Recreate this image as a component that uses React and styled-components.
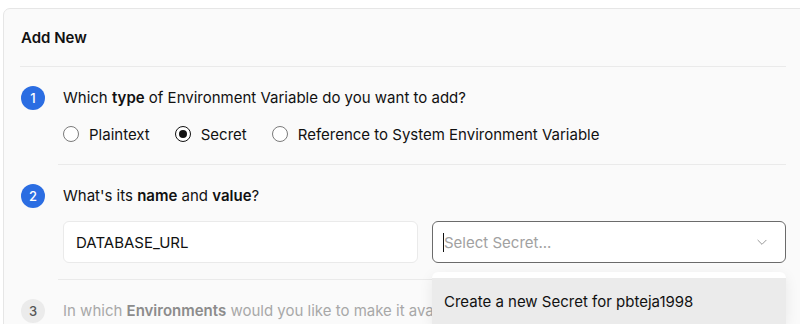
import styled, { createGlobalStyle } from "styled-components"

const GlobalStyle = createGlobalStyle`
    html, body {
        margin: 0;
        background: #ffffff;
        font-family: Inter, "Noto Sans", sans-serif;
        color: #111111;
        overflow: hidden;
    }
`

export default function App() {
    return (
        <Page>
            <GlobalStyle />
            <Card>
                <CardHeader>Add New</CardHeader>
                <Divider />

                <Step>
                    <StepNumber>1</StepNumber>
                    <StepBody>
                        <StepTitle>Which <b>type</b> of Environment Variable do you want to add?</StepTitle>
                        <RadioRow>
                            <RadioOption>
                                <Radio />
                                Plaintext
                            </RadioOption>
                            <RadioOption>
                                <Radio checked />
                                Secret
                            </RadioOption>
                            <RadioOption>
                                <Radio />
                                Reference to System Environment Variable
                            </RadioOption>
                        </RadioRow>
                    </StepBody>
                </Step>
                <Divider inset />

                <Step>
                    <StepNumber>2</StepNumber>
                    <StepBody>
                        <StepTitle>What's its <b>name</b> and <b>value</b>?</StepTitle>
                        <Fields>
                            <TextField>DATABASE_URL</TextField>
                            <SelectWrap>
                                <SelectBox>
                                    <Caret />
                                    <Placeholder>Select Secret...</Placeholder>
                                    <svg width="14" height="14" viewBox="0 0 24 24" fill="none" stroke="#8f8f8f" strokeWidth="1.6" strokeLinecap="round" strokeLinejoin="round">
                                        <path d="M5 9l7 7 7-7" />
                                    </svg>
                                </SelectBox>
                                <Menu>
                                    <MenuItem active>Create a new Secret for pbteja1998</MenuItem>
                                </Menu>
                            </SelectWrap>
                        </Fields>
                    </StepBody>
                </Step>
                <Divider inset />

                <Step>
                    <StepNumber muted>3</StepNumber>
                    <StepBody>
                        <StepTitle muted>In which <b>Environments</b> would you like to make it available?</StepTitle>
                    </StepBody>
                </Step>
            </Card>
        </Page>
    )
}

const Page = styled.div`
    padding: 8px 0 0 3px;
    width: 797px;
    height: 316px;
    overflow: hidden;
`
const Card = styled.div`
    width: 840px;
    background: #fafafa;
    border: 1px solid #e6e6e6;
    border-radius: 7px;
    padding: 0 16px 40px 16px;
`
const CardHeader = styled.div`
    height: 57px;
    display: flex;
    align-items: center;
    padding-left: 1px;
    font-size: 15px;
    font-weight: 600;
    color: #111;
`
const Divider = styled.div`
    height: 1px;
    background: #eaeaea;
    margin-left: ${p => (p.inset ? "38px" : "0")};
    width: ${p => (p.inset ? "728px" : "766px")};
`
const Step = styled.div`
    display: flex;
    gap: 18px;
    padding: 18px 0 16px 1px;
`
const StepNumber = styled.div`
    flex: 0 0 24px;
    height: 24px;
    margin-top: 1px;
    border-radius: 50%;
    background: ${p => (p.muted ? "#ebebeb" : "#2b6de2")};
    color: ${p => (p.muted ? "#555" : "#fff")};
    font-size: 13px;
    font-weight: 500;
    display: flex;
    align-items: center;
    justify-content: center;
`
const StepBody = styled.div`
    flex: 1;
    display: flex;
    flex-direction: column;
`
const StepTitle = styled.div`
    height: 26px;
    line-height: 26px;
    white-space: nowrap;
    font-size: 15px;
    color: ${p => (p.muted ? "#a8a8a8" : "#111")};
    b {
        font-weight: 600;
        color: ${p => (p.muted ? "#8c8c8c" : "#111")};
    }
`
const RadioRow = styled.div`
    display: flex;
    gap: 25px;
    margin-top: 13px;
    margin-bottom: 4px;
`
const RadioOption = styled.label`
    display: flex;
    align-items: center;
    gap: 10px;
    font-size: 15px;
    height: 20px;
`
const Radio = styled.span`
    width: 16px;
    height: 16px;
    box-sizing: border-box;
    border-radius: 50%;
    border: ${p => (p.checked ? "1.5px solid #111" : "1px solid #7a7a7a")};
    background: #fff;
    display: flex;
    align-items: center;
    justify-content: center;
    &::after {
        content: "";
        display: ${p => (p.checked ? "block" : "none")};
        width: 8px;
        height: 8px;
        border-radius: 50%;
        background: #111;
    }
`
const Fields = styled.div`
    display: grid;
    grid-template-columns: 355px 354px;
    gap: 14px;
    margin-top: 12px;
`
const TextField = styled.div`
    height: 42px;
    box-sizing: border-box;
    border: 1px solid #eaeaea;
    border-radius: 6px;
    background: #fff;
    padding: 0 12px;
    display: flex;
    align-items: center;
    font-size: 15px;
`
const SelectWrap = styled.div`
    position: relative;
`
const SelectBox = styled.div`
    height: 42px;
    box-sizing: border-box;
    border: 1px solid #6b6b6b;
    border-radius: 6px;
    background: #fff;
    padding: 0 16px 0 10px;
    display: flex;
    align-items: center;
`
const Caret = styled.span`
    width: 1px;
    height: 19px;
    background: #111;
`
const Placeholder = styled.span`
    flex: 1;
    font-size: 15px;
    color: #a1a1a1;
`
const Menu = styled.div`
    position: absolute;
    top: 51px;
    left: 0;
    right: 0;
    background: #fff;
    border-radius: 6px;
    padding-top: 6px;
    box-shadow: 0 4px 14px rgba(0, 0, 0, 0.08);
    z-index: 2;
`
const MenuItem = styled.div`
    height: 46px;
    padding: 0 12px;
    display: flex;
    align-items: center;
    font-size: 15px;
    color: #111;
    background: ${p => (p.active ? "#ebebeb" : "transparent")};
`
